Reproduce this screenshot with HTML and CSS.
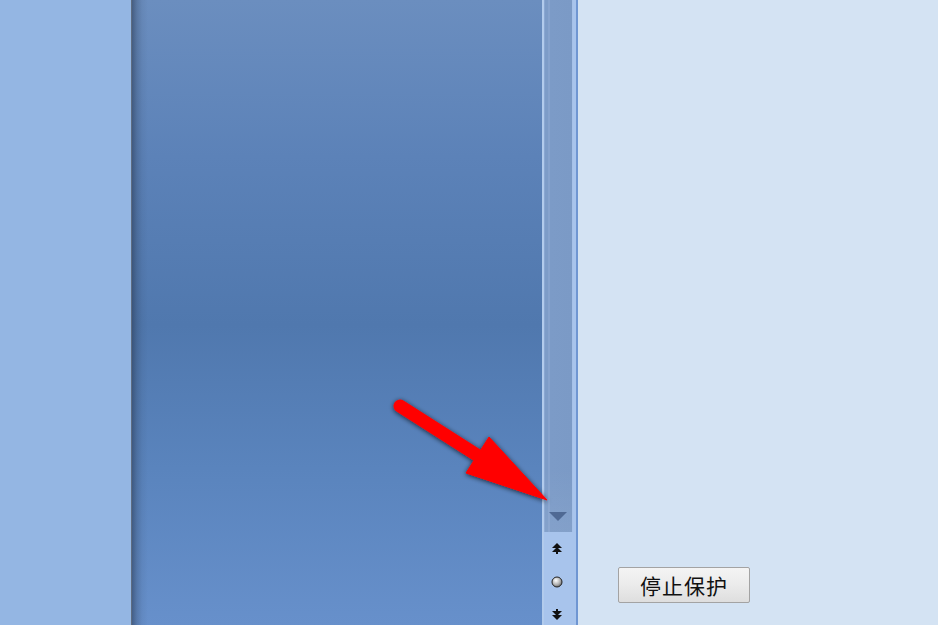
FILE: index.html
```html
<!DOCTYPE html>
<html lang="zh">
<head>
<meta charset="utf-8">
<link rel="stylesheet" href="styles.css">
</head>
<body>
<div class="screen">
  <div class="left-panel"></div>
  <div class="divider"></div>
  <div class="main-panel"></div>
  <div class="scroll-col">
    <div class="track">
      <div class="track-btn">
        <svg width="18" height="9" viewBox="0 0 18 9"><polygon points="0,0 18,0 9,9" fill="#4f6993"/></svg>
      </div>
    </div>
    <div class="nav">
      <svg width="10" height="11" viewBox="0 0 10 11"><polygon points="5,0 10,5 0,5" fill="#111"/><polygon points="5,4 10,9 0,9" fill="#111"/><rect x="4" y="8" width="2" height="3" fill="#111"/></svg>
      <svg width="12" height="12" viewBox="0 0 12 12"><defs><radialGradient id="g" cx="0.4" cy="0.35" r="0.7"><stop offset="0" stop-color="#ffffff"/><stop offset="0.6" stop-color="#b0b0b0"/><stop offset="1" stop-color="#606060"/></radialGradient></defs><circle cx="6" cy="6" r="5" fill="url(#g)" stroke="#222" stroke-width="1"/></svg>
      <svg width="10" height="11" viewBox="0 0 10 11"><rect x="4" y="0" width="2" height="3" fill="#111"/><polygon points="0,2 10,2 5,7" fill="#111"/><polygon points="0,6 10,6 5,11" fill="#111"/></svg>
    </div>
  </div>
  <div class="right-panel">
    <button class="stop-btn">停止保护</button>
  </div>
  <svg class="pointer" width="938" height="625" viewBox="0 0 938 625">
    <defs>
      <filter id="sh" x="-20%" y="-20%" width="140%" height="140%">
        <feGaussianBlur in="SourceAlpha" stdDeviation="2.5"/>
        <feOffset dx="0" dy="1" result="b"/>
        <feComponentTransfer><feFuncA type="linear" slope="0.7"/></feComponentTransfer>
        <feMerge><feMergeNode/><feMergeNode in="SourceGraphic"/></feMerge>
      </filter>
    </defs>
    <g filter="url(#sh)" fill="#ff0000" stroke="#ff0000">
      <line x1="400" y1="406" x2="480" y2="457" stroke-width="13" stroke-linecap="round"/>
      <polygon points="466,473 489,437 547,500" stroke-width="1" stroke-linejoin="round"/>
    </g>
  </svg>
</div>
</body>
</html>
```

FILE: styles.css
```css
html, body {
  margin: 0;
  padding: 0;
  width: 938px;
  height: 625px;
  overflow: hidden;
}

.screen {
  position: relative;
  display: flex;
  width: 938px;
  height: 625px;
}

.left-panel {
  width: 131px;
  background: #94b6e3;
}

.divider {
  width: 1px;
  background: #5e6c80;
}

.main-panel {
  width: 410px;
  background:
    linear-gradient(to right, rgba(40, 55, 80, 0.55) 0px, rgba(40, 55, 80, 0.25) 5px, rgba(40, 55, 80, 0.08) 10px, rgba(40, 55, 80, 0) 16px),
    linear-gradient(to bottom, #6b8ebf 0%, #5c82b8 25%, #5078ae 52%, #5a84bd 75%, #6790cb 100%);
}

.scroll-col {
  width: 36px;
  display: flex;
  flex-direction: column;
  background: #a8c4ec;
  border-left: 2px solid #b2cbec;
  box-sizing: border-box;
  border-right: 2px solid #6f96d2;
}

.track {
  height: 532px;
  box-sizing: border-box;
  margin-right: 3px;
  border-right: 1px solid #a6c1e8;
  background:
    linear-gradient(to bottom, rgba(255, 255, 255, 0) 0%, rgba(255, 255, 255, 0) 88%, rgba(255, 255, 255, 0.06) 100%),
    linear-gradient(to right, #8aa7d2 0px, #8aa7d2 1px, #7d9cc8 1px, #7d9cc8 4px, #86a3ce 4px, #86a3ce 6px, #7c9bc7 6px, #7b9ac6 100%);
  display: flex;
  flex-direction: column;
  justify-content: flex-end;
}

.track-btn {
  height: 42px;
  display: flex;
  align-items: center;
  justify-content: center;
  padding-top: 10px;
  box-sizing: border-box;
}

.nav {
  flex: 1;
  display: flex;
  flex-direction: column;
  align-items: center;
  justify-content: space-between;
  padding: 11px 6px 5px 0;
}

.right-panel {
  flex: 1;
  background: #d4e3f3;
  padding: 567px 0 0 40px;
  box-sizing: border-box;
}

.stop-btn {
  width: 132px;
  height: 36px;
  border: 1px solid #a3a3a3;
  border-radius: 2px;
  background: linear-gradient(to bottom, #f4f4f4 0%, #ebebeb 50%, #dedede 100%);
  font-family: "Noto Sans CJK SC", sans-serif;
  font-size: 21px;
  color: #111;
  padding: 0;
  line-height: 34px;
  letter-spacing: 1px;
}

.pointer {
  position: absolute;
  left: 0;
  top: 0;
  pointer-events: none;
}
```
